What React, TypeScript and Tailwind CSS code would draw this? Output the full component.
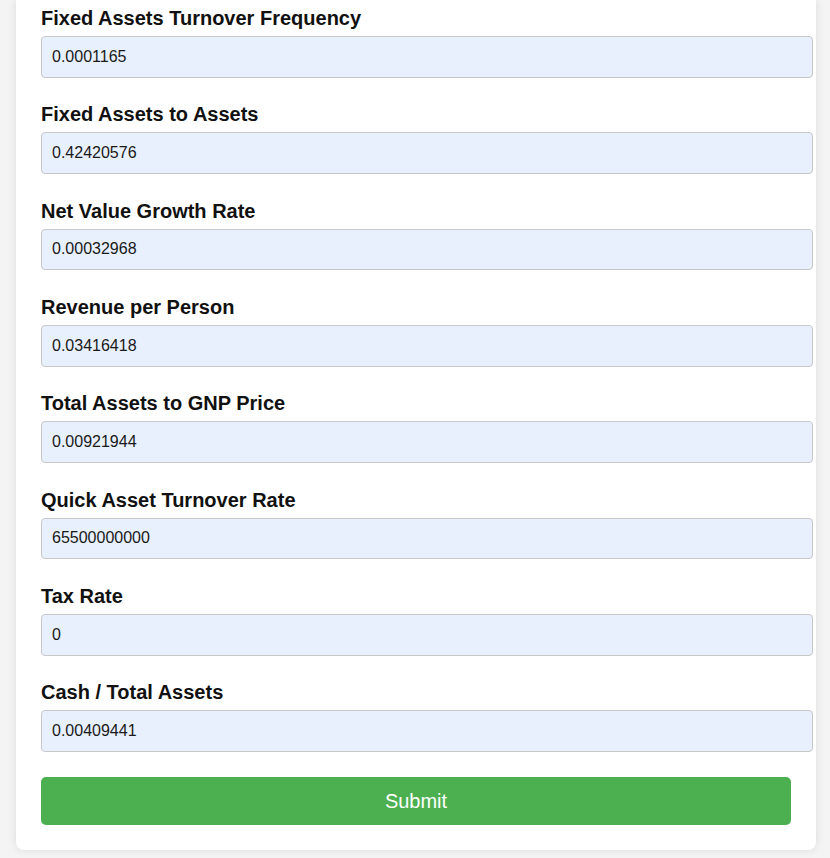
const fields = [
  { label: "Fixed Assets Turnover Frequency", value: "0.0001165" },
  { label: "Fixed Assets to Assets", value: "0.42420576" },
  { label: "Net Value Growth Rate", value: "0.00032968" },
  { label: "Revenue per Person", value: "0.03416418" },
  { label: "Total Assets to GNP Price", value: "0.00921944" },
  { label: "Quick Asset Turnover Rate", value: "65500000000" },
  { label: "Tax Rate", value: "0" },
  { label: "Cash / Total Assets", value: "0.00409441" },
];

export default function App() {
  return (
    <div className="min-h-screen bg-[#f4f4f4] font-['Liberation_Sans',Arial,sans-serif] text-[#111]">
      <div className="ml-[16px] w-[800px] bg-white rounded-b-lg px-[25px] pt-[6px] pb-[25px] shadow-[0_0_10px_rgba(0,0,0,0.1)]">
        <form onSubmit={(e) => e.preventDefault()}>
          {fields.map((f) => (
            <div key={f.label} className="mb-[24.85px]">
              <label className="block text-[20px] leading-[23px] font-bold pt-[1px] mb-[6px]">{f.label}</label>
              <input
                type="text"
                defaultValue={f.value}
                className="block w-[772px] h-[41.5px] px-[10px] text-[16px] text-[#1a1a1a] bg-[#e8f0fe] border border-[#c8c8c8] rounded-[4px] outline-none"
              />
            </div>
          ))}
          <button
            type="submit"
            className="block w-full h-[48px] bg-[#4caf50] text-white text-[20px] rounded-[5px] mt-[1.5px]"
          >
            Submit
          </button>
        </form>
      </div>
    </div>
  );
}
